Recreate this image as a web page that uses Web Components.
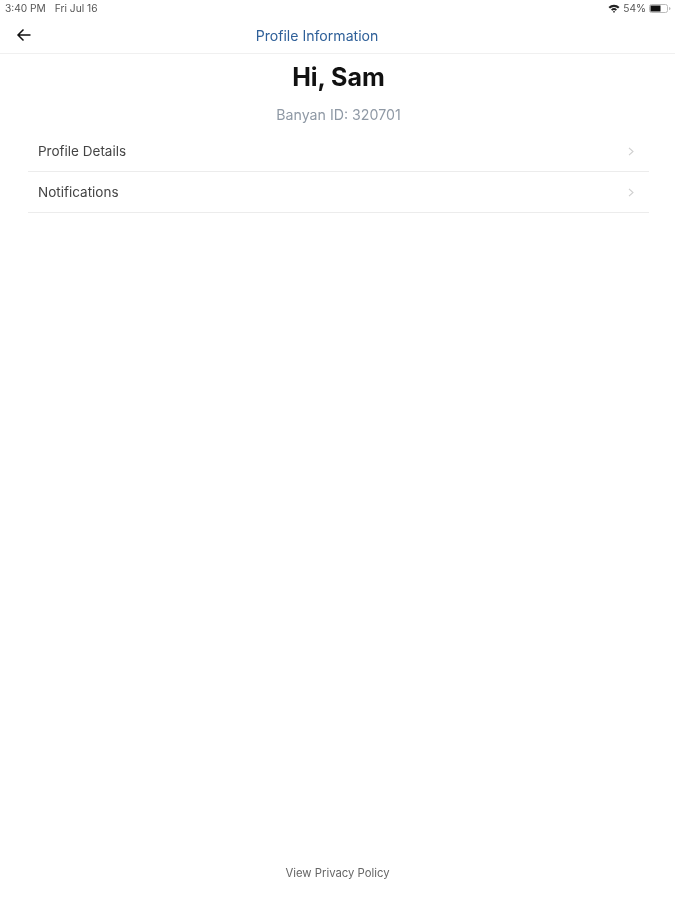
<!DOCTYPE html>
<html>
<head>
<meta charset="utf-8">
<title>Profile Information</title>
<style>
  html, body { margin: 0; height: 100%; background: #fff; }
  body { font-family: Inter, "Liberation Sans", sans-serif; }
</style>
</head>
<body>
<profile-screen>
  <status-bar slot="status"></status-bar>
  <nav-header slot="nav" title="Profile Information"></nav-header>
  <h-greeting name="Sam" banyan="320701"></h-greeting>
  <menu-row>Profile Details</menu-row>
  <menu-row>Notifications</menu-row>
  <span slot="footer">View Privacy Policy</span>
</profile-screen>

<script>
class ProfileScreen extends HTMLElement {
  constructor() {
    super();
    this.attachShadow({ mode: "open" });
  }
  connectedCallback() {
    this.shadowRoot.innerHTML = `
      <style>
        :host { display: flex; flex-direction: column; height: 900px; filter: blur(0.4px); }
        main { flex: 1; display: flex; flex-direction: column; padding: 0 26px 0 28px; }
        footer { height: 34px; text-align: center; font-size: 11.3px; line-height: 14px; color: #666; }
      </style>
      <slot name="status"></slot>
      <slot name="nav"></slot>
      <main><slot></slot></main>
      <footer><slot name="footer"></slot></footer>
    `;
  }
}
customElements.define("profile-screen", ProfileScreen);

class StatusBar extends HTMLElement {
  constructor() {
    super();
    this.attachShadow({ mode: "open" });
  }
  connectedCallback() {
    this.shadowRoot.innerHTML = `
      <style>
        :host { display: flex; justify-content: space-between; align-items: center; height: 16px; padding: 0 4px 1px 5px; font-size: 10.2px; color: #555; }
        .left { display: flex; gap: 9px; }
        .right { display: flex; align-items: center; gap: 3px; }
        svg { display: block; }
      </style>
      <div class="left"><span>3:40 PM</span><span>Fri Jul 16</span></div>
      <div class="right">
        <svg width="12" height="9" viewBox="0 0 12 9">
          <path d="M0.5 3 A8 8 0 0 1 11.5 3 L10 4.6 A6 6 0 0 0 2 4.6 Z" fill="#222"/>
          <path d="M3 5.4 A4.5 4.5 0 0 1 9 5.4 L7.7 6.7 A2.6 2.6 0 0 0 4.3 6.7 Z" fill="#222"/>
          <path d="M6 9 L4.9 7.6 A1.6 1.6 0 0 1 7.1 7.6 Z" fill="#222"/>
        </svg>
        <span>54%</span>
        <svg width="22" height="9" viewBox="0 0 22 9">
          <rect x="0.5" y="0.5" width="18" height="8" rx="2" fill="none" stroke="#bbb"/>
          <rect x="1.5" y="1.5" width="10" height="6" fill="#111"/>
          <path d="M20 3 a1.5 1.5 0 0 1 0 3 Z" fill="#bbb"/>
        </svg>
      </div>
    `;
  }
}
customElements.define("status-bar", StatusBar);

class NavHeader extends HTMLElement {
  constructor() {
    super();
    this.attachShadow({ mode: "open" });
  }
  connectedCallback() {
    this.shadowRoot.innerHTML = `
      <style>
        :host { display: flex; align-items: center; position: relative; height: 36px; border-bottom: 1px solid #f0f0f0; }
        svg { position: absolute; left: 16px; top: 11px; }
        h1 { flex: 1; margin: 0; padding-right: 41px; text-align: center; font-size: 14.1px; font-weight: 400; color: #2f6099; }
      </style>
      <svg width="16" height="14" viewBox="0 0 16 14">
        <path d="M14.5 7 H2 M7.5 1.5 L2 7 L7.5 12.5" fill="none" stroke="#111" stroke-width="1.5"/>
      </svg>
      <h1>${this.getAttribute("title")}</h1>
    `;
  }
}
customElements.define("nav-header", NavHeader);

class HGreeting extends HTMLElement {
  constructor() {
    super();
    this.attachShadow({ mode: "open" });
  }
  connectedCallback() {
    this.shadowRoot.innerHTML = `
      <style>
        :host { display: block; text-align: center; }
        h2 { margin: 8px 0 0; font-size: 25px; line-height: 30px; font-weight: 700; color: #111; }
        p { margin: 14px 0 7px; font-size: 14.2px; line-height: 18px; color: #8f99a5; }
      </style>
      <h2>Hi, ${this.getAttribute("name")}</h2>
      <p>Banyan ID: ${this.getAttribute("banyan")}</p>
    `;
  }
}
customElements.define("h-greeting", HGreeting);

class MenuRow extends HTMLElement {
  constructor() {
    super();
    this.attachShadow({ mode: "open" });
  }
  connectedCallback() {
    this.shadowRoot.innerHTML = `
      <style>
        :host { display: flex; align-items: center; justify-content: space-between; height: 40px; padding: 0 15px 0 10px; border-bottom: 1px solid #ececec; font-size: 13.5px; color: #444; }
        svg { display: block; }
      </style>
      <span><slot></slot></span>
      <svg width="6" height="9" viewBox="0 0 6 9">
        <path d="M1 0.8 L5 4.5 L1 8.2" fill="none" stroke="#cfcfcf" stroke-width="1.1"/>
      </svg>
    `;
  }
}
customElements.define("menu-row", MenuRow);
</script>
</body>
</html>
